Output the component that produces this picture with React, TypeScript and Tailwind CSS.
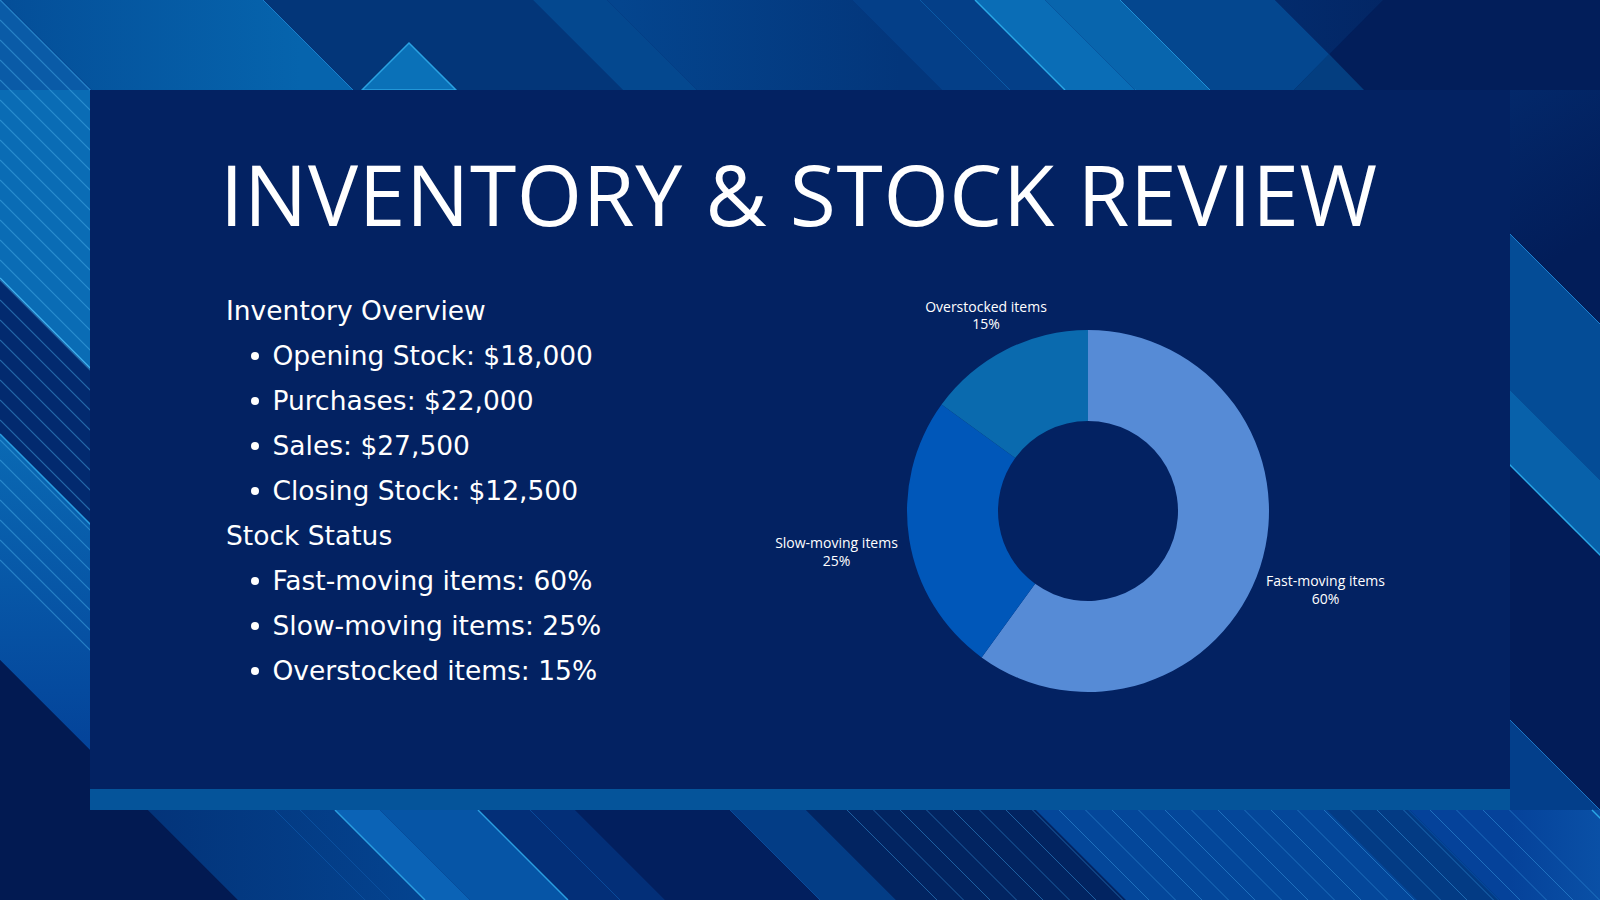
const band = (c1: number, c2: number, y0: number, y1: number) =>
  `${c1 + y0},${y0} ${c2 + y0},${y0} ${c2 + y1},${y1} ${c1 + y1},${y1}`

const range = (from: number, to: number, step: number) => {
  const out: number[] = []
  for (let v = from; v <= to; v += step) out.push(v)
  return out
}

function Background() {
  // bands run at 45deg, c = x - y is constant along each edge
  const leftLines = range(-560, 0, 20)
  const bottomLines = range(37, 700, 26.5)
  return (
    <svg className="absolute inset-0" width="1600" height="900" viewBox="0 0 1600 900">
      <defs>
        <linearGradient id="topA" gradientUnits="userSpaceOnUse" x1="0" y1="0" x2="300" y2="0">
          <stop offset="0" stopColor="#044e98" />
          <stop offset="1" stopColor="#0664ad" />
        </linearGradient>
        <linearGradient id="topB" gradientUnits="userSpaceOnUse" x1="620" y1="0" x2="900" y2="0">
          <stop offset="0" stopColor="#04458e" />
          <stop offset="1" stopColor="#03367b" />
        </linearGradient>
        <linearGradient id="topC" gradientUnits="userSpaceOnUse" x1="1280" y1="0" x2="1600" y2="0">
          <stop offset="0" stopColor="#032b6c" />
          <stop offset="1" stopColor="#021c57" />
        </linearGradient>
        <linearGradient id="leftA" gradientUnits="userSpaceOnUse" x1="0" y1="430" x2="0" y2="740">
          <stop offset="0" stopColor="#0a6ab4" />
          <stop offset="1" stopColor="#04449a" />
        </linearGradient>
        <linearGradient id="rightA" gradientUnits="userSpaceOnUse" x1="1510" y1="90" x2="1600" y2="230">
          <stop offset="0" stopColor="#03286a" />
          <stop offset="1" stopColor="#021d59" />
        </linearGradient>
        <linearGradient id="bottomA" gradientUnits="userSpaceOnUse" x1="150" y1="0" x2="420" y2="0">
          <stop offset="0" stopColor="#03347a" />
          <stop offset="1" stopColor="#04438f" />
        </linearGradient>
        <linearGradient id="cornerBR" gradientUnits="userSpaceOnUse" x1="1510" y1="0" x2="1600" y2="0">
          <stop offset="0" stopColor="#05429a" />
          <stop offset="1" stopColor="#0a50a6" />
        </linearGradient>
      </defs>

      <rect width="1600" height="900" fill="#032a6e" />

      {/* top strip */}
      <polygon points={band(-200, 2, 0, 90)} fill="#0a5ba7" />
      <polygon points={band(2, 263, 0, 90)} fill="url(#topA)" />
      <polygon points={band(263, 533, 0, 90)} fill="#033679" />
      <polygon points={band(533, 607, 0, 90)} fill="#04488f" />
      <polygon points={band(607, 852, 0, 90)} fill="url(#topB)" />
      <polygon points={band(852, 975, 0, 90)} fill="#043f88" />
      <polygon points={band(975, 1045, 0, 90)} fill="#0a6db6" />
      <polygon points={band(1045, 1120, 0, 90)} fill="#0865ad" />
      <polygon points={band(1120, 1275, 0, 90)} fill="#04478f" />
      <polygon points={band(1275, 1800, 0, 90)} fill="url(#topC)" />
      <polygon points="1383,0 1600,0 1600,90 1294,90" fill="#021e5a" />
      <polygon points="1294,90 1329,54 1364,90" fill="#043e80" />
      <polygon points="362,90 409,43 456,90" fill="#0a71b8" stroke="#2aa2e2" strokeWidth="1.5" />
      <line x1="263" y1="0" x2="353" y2="90" stroke="#1b7fcc" strokeWidth="1" />
      <line x1="975" y1="0" x2="1065" y2="90" stroke="#2aa8e6" strokeWidth="1.5" />
      <line x1="1120" y1="0" x2="1210" y2="90" stroke="#1f8fd6" strokeWidth="1" />
      <line x1="920" y1="0" x2="1010" y2="90" stroke="#0b5aa6" strokeWidth="1" />

      {/* left strip */}
      <polygon points={band(-278, 100, 90, 810)} fill="#0a6cb5" />
      <polygon points={band(-434, -278, 90, 810)} fill="#022a6f" />
      <polygon points={band(-660, -434, 90, 810)} fill="url(#leftA)" />
      <polygon points={band(-1100, -660, 90, 810)} fill="#021a52" />
      {leftLines.map((c) => (
        <line
          key={c}
          x1={c + Math.max(0, -c)}
          y1={Math.max(0, -c)}
          x2={c + 810}
          y2={810}
          stroke="#4fb4ee"
          strokeOpacity="0.45"
          strokeWidth="1.2"
        />
      ))}
      <line x1="0" y1="278" x2="532" y2="810" stroke="#3fb0ee" strokeWidth="1.5" />
      <line x1="0" y1="434" x2="376" y2="810" stroke="#2a9ee0" strokeWidth="1.5" />

      {/* right strip */}
      <polygon points={band(1276, 2100, 90, 810)} fill="url(#rightA)" />
      <polygon points={band(1120, 1276, 90, 810)} fill="#044c96" />
      <polygon points={band(1045, 1120, 90, 810)} fill="#0861aa" />
      <polygon points={band(790, 1045, 90, 810)} fill="#021c58" />
      <polygon points={band(500, 790, 90, 810)} fill="#033f8b" />
      <line x1="1366" y1="90" x2="2086" y2="810" stroke="#1d80cf" strokeWidth="1" />
      <line x1="1135" y1="90" x2="1855" y2="810" stroke="#2aa8e6" strokeWidth="1.5" />
      <line x1="880" y1="90" x2="1600" y2="810" stroke="#1a74c4" strokeWidth="1" />

      {/* bottom strip */}
      <polygon points={band(-1100, -662, 810, 900)} fill="#021a52" />
      <polygon points={band(-662, -475, 810, 900)} fill="url(#bottomA)" />
      <polygon points={band(-475, -430, 810, 900)} fill="#0b63b6" />
      <polygon points={band(-430, -332, 810, 900)} fill="#0655a6" />
      <polygon points={band(-332, -235, 810, 900)} fill="#032f78" />
      <polygon points={band(-235, -80, 810, 900)} fill="#021f5e" />
      <polygon points={band(-80, -4, 810, 900)} fill="#033d86" />
      <polygon points={band(-4, 226, 810, 900)} fill="#022461" />
      <polygon points={band(226, 600, 810, 900)} fill="#04479a" />
      <polygon points={band(600, 1200, 810, 900)} fill="url(#cornerBR)" />
      <polygon points={band(517, 598, 810, 900)} fill="#001844" fillOpacity="0.25" />
      <line x1="335" y1="810" x2="425" y2="900" stroke="#2a9ee0" strokeWidth="1.5" />
      <line x1="478" y1="810" x2="568" y2="900" stroke="#2a9ee0" strokeWidth="1.5" />
      <line x1="530" y1="810" x2="620" y2="900" stroke="#0a4a9a" strokeWidth="1" />
      <line x1="730" y1="810" x2="820" y2="900" stroke="#0a4a9a" strokeWidth="1" />
      <line x1="275" y1="810" x2="365" y2="900" stroke="#0a4f9e" strokeWidth="1" />
      <line x1="300" y1="810" x2="390" y2="900" stroke="#0a4f9e" strokeWidth="1" />
      {bottomLines.map((c) => (
        <line
          key={c}
          x1={c + 810}
          y1={810}
          x2={c + 900}
          y2={900}
          stroke="#3a9ae0"
          strokeOpacity="0.5"
          strokeWidth="1"
        />
      ))}
      <line x1="1592" y1="810" x2="1682" y2="900" stroke="#2aa8e6" strokeWidth="1.5" />
    </svg>
  )
}

function Donut() {
  const labelFont = { fontFamily: '"Open Sans", sans-serif', fontSize: 14 }
  return (
    <svg width="700" height="430" viewBox="0 0 700 430">
      <path
        d="M348,42 A181,181 0 1 1 241.61,369.43 L295.10,295.81 A90,90 0 1 0 348,133 Z"
        fill="#568bd6"
      />
      <path
        d="M241.61,369.43 A181,181 0 0 1 201.57,116.61 L275.19,170.10 A90,90 0 0 0 295.10,295.81 Z"
        fill="#0057b9"
      />
      <path
        d="M201.57,116.61 A181,181 0 0 1 348,42 L348,133 A90,90 0 0 0 275.19,170.10 Z"
        fill="#0a6aae"
      />
      <g fill="#ffffff" textAnchor="middle" style={labelFont}>
        <text x="246" y="24">Overstocked items</text>
        <text x="246" y="41">15%</text>
        <text x="96.5" y="259.5">Slow-moving items</text>
        <text x="96.5" y="278">25%</text>
        <text x="585.5" y="297.5">Fast-moving items</text>
        <text x="585.5" y="316">60%</text>
      </g>
    </svg>
  )
}

const overview = ['Opening Stock: $18,000', 'Purchases: $22,000', 'Sales: $27,500', 'Closing Stock: $12,500']
const status = ['Fast-moving items: 60%', 'Slow-moving items: 25%', 'Overstocked items: 15%']

function Bullets({ items }: { items: string[] }) {
  return (
    <ul>
      {items.map((t) => (
        <li key={t} className="flex items-center ml-[25px]">
          <span className="w-2 h-2 rounded-full bg-white shrink-0" />
          <span className="ml-[13.5px]">{t}</span>
        </li>
      ))}
    </ul>
  )
}

export default function App() {
  return (
    <div className="relative w-full h-[900px] overflow-hidden p-[90px] bg-[#032a6e]">
      <Background />
      <div className="relative h-full flex flex-col">
        <div className="flex-1 bg-[#032262] pl-[130px] text-white">
          <h1 className="mt-[62px] text-[84px] leading-[84px] tracking-[0.65px] font-normal font-['Open_Sans',sans-serif] whitespace-nowrap">
            INVENTORY &amp; STOCK REVIEW
          </h1>
          <div className="flex mt-[52px]">
            <div className="w-[520px] pl-[6px] text-[26.5px] leading-[45px] font-['DejaVu_Sans',sans-serif]">
              <div>Inventory Overview</div>
              <Bullets items={overview} />
              <div>Stock Status</div>
              <Bullets items={status} />
            </div>
            <Donut />
          </div>
        </div>
        <div className="h-[21px] bg-[#05549a]" />
      </div>
    </div>
  )
}
